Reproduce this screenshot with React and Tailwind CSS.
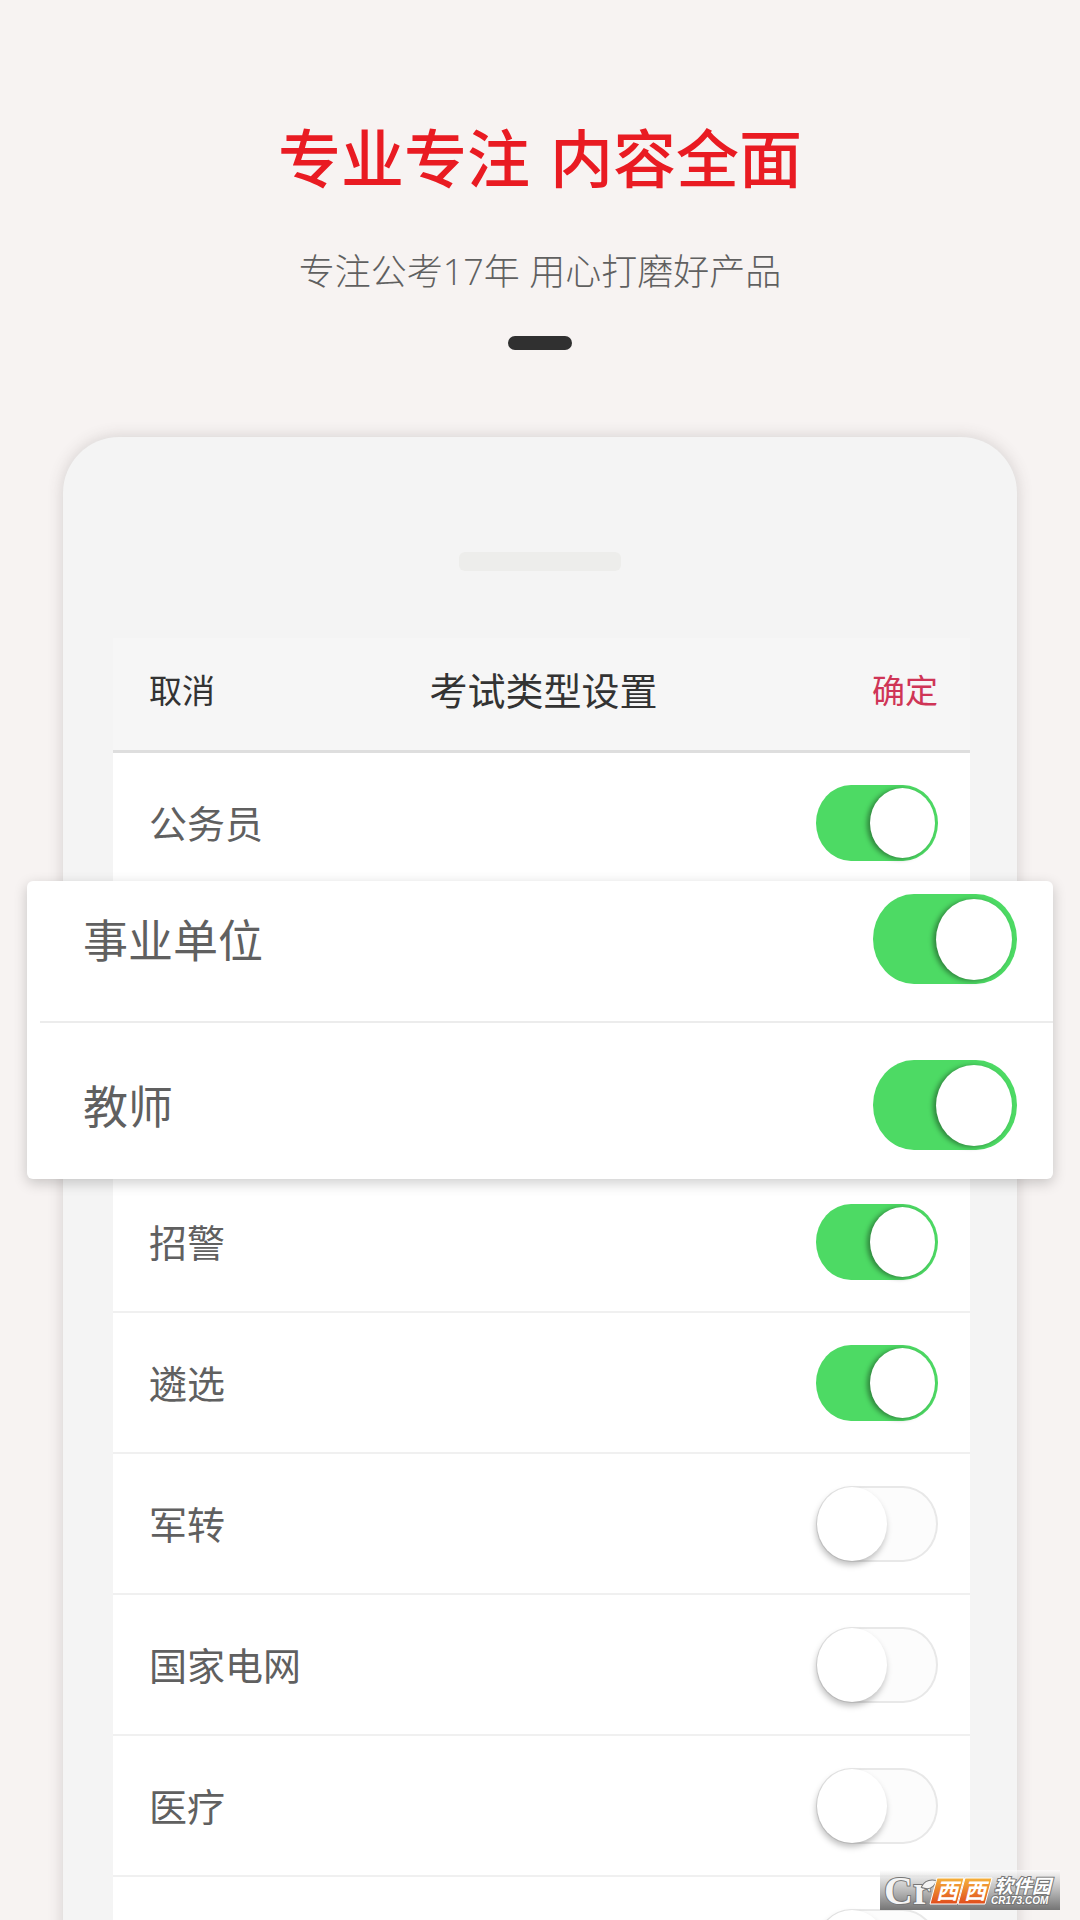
import { useState } from 'react';

const PINNED = [
  { id: 'institution', label: '事业单位' },
  { id: 'teacher', label: '教师' },
];

const REST = [
  { id: 'police', label: '招警' },
  { id: 'selection', label: '遴选' },
  { id: 'military', label: '军转' },
  { id: 'grid', label: '国家电网' },
  { id: 'medical', label: '医疗' },
  { id: 'other', label: '' },
];

function Switch({ id, checked, onChange, large, label }) {
  const size = large
    ? 'h-[90px] w-[144px] rounded-[41px/45px] px-[5px] before:h-[81px] before:w-[76px]'
    : checked
      ? 'h-[76px] w-[122px] rounded-[35px/38px] px-[3px] before:h-[70px] before:w-[65px]'
      : 'h-[76px] w-[122px] rounded-[35px/38px] before:h-[74px] before:w-[70px]';
  const color = checked
    ? 'justify-end bg-[#4dda64] before:shadow-[-3px_1px_5px_rgba(0,0,0,0.4)]'
    : 'justify-start border-2 border-[#e8e8e8] bg-[#fcfcfc] before:-ml-px before:shadow-[-1px_4px_6px_rgba(0,0,0,0.25)]';

  return (
    <input
      id={id}
      type="checkbox"
      role="switch"
      aria-label={label || '其他'}
      checked={checked}
      onChange={onChange}
      className={`flex shrink-0 cursor-pointer appearance-none items-center before:shrink-0 before:rounded-[50%] before:bg-white ${size} ${color}`}
    />
  );
}

function Row({ item, checked, onToggle }) {
  return (
    <li className="flex h-[141px] items-center justify-between border-b-2 border-[#f0f0f0] pr-8 pl-9">
      <label htmlFor={item.id} className="text-[38px] leading-none text-[#606060]">
        {item.label}
      </label>
      <Switch id={item.id} label={item.label} checked={checked} onChange={() => onToggle(item.id)} />
    </li>
  );
}

function Watermark() {
  return (
    <div className="absolute right-5 bottom-[10px] h-10 w-[180px] bg-linear-to-b from-white/60 via-[#b4b4b4]/90 to-[#757575]">
      <svg viewBox="0 0 180 40" className="h-full w-full overflow-visible" role="img" aria-label="西西软件园">
        <defs>
          <linearGradient id="tile" x1="0" y1="0" x2="0" y2="1">
            <stop offset="0" stopColor="#f5b23c" />
            <stop offset="1" stopColor="#e04c1c" />
          </linearGradient>
        </defs>
        <g fill="#f4f4f4" stroke="#777" strokeWidth="2" paintOrder="stroke">
          <text x="4" y="34" fontSize="40" fontWeight="700" fontFamily="Liberation Serif, serif">Cr</text>
          <path d="M42 17 Q46 9 56 11 Q52 21 42 17 Z" />
        </g>
        <g fill="url(#tile)" stroke="#fff" strokeWidth="1">
          <path d="M57 8 H84 L77 34 H50 Z" />
          <path d="M85 8 H112 L105 34 H78 Z" />
        </g>
        <g fill="#fff" fontFamily="Noto Sans CJK SC, sans-serif" fontWeight="700" fontStyle="italic">
          <text x="56" y="29" fontSize="22">西</text>
          <text x="84" y="29" fontSize="22">西</text>
          <g stroke="#777" strokeWidth="2" paintOrder="stroke">
            <text x="114" y="23" fontSize="19">软件园</text>
            <text x="111" y="34" fontSize="10" fontFamily="Liberation Sans, sans-serif">CR173.COM</text>
          </g>
        </g>
      </svg>
    </div>
  );
}

export default function App() {
  const [enabled, setEnabled] = useState({
    civil: true,
    institution: true,
    teacher: true,
    police: true,
    selection: true,
  });

  const toggle = (id) => setEnabled((prev) => ({ ...prev, [id]: !prev[id] }));

  return (
    <div className="relative flex h-screen flex-col overflow-hidden bg-[#f7f3f2] font-['Open_Sans','Noto_Sans_CJK_SC',sans-serif]">
      <header className="flex shrink-0 flex-col items-center pt-[126px]">
        <h1 className="flex gap-5 text-[63px] leading-[64px] font-medium text-[#e91b22]">
          <span>专业专注</span>
          <span>内容全面</span>
        </h1>
        <p className="mt-[58px] text-[36px] leading-[48px] font-light text-[#606060]">专注公考17年 用心打磨好产品</p>
        <div className="mt-10 h-[14px] w-16 rounded-full bg-[#303030]" />
      </header>

      {/* phone */}
      <div className="mx-[63px] mt-[87px] shrink-0 rounded-t-[56px] bg-[#f4f4f4] pr-[47px] pl-[50px] shadow-[0_0_16px_rgba(70,60,60,0.2)]">
        <div className="flex h-[201px] justify-center pt-[115px] pr-1">
          <div className="h-[19px] w-[162px] rounded-md bg-[#ededeb]" />
        </div>

        <div className="bg-white">
          <div className="grid h-[115px] grid-cols-3 items-center border-b-3 border-[#dedede] bg-[#f6f6f6] pr-8 pb-2 pl-9 text-[33px] leading-none">
            <button type="button" className="justify-self-start text-[#333]">取消</button>
            <h2 className="justify-self-center text-[38px] whitespace-nowrap text-[#333]">考试类型设置</h2>
            <button type="button" className="justify-self-end text-[#cf3556]">确定</button>
          </div>

          <ul>
            <Row item={{ id: 'civil', label: '公务员' }} checked={!!enabled.civil} onToggle={toggle} />

            {/* enlarged rows, wider than the phone */}
            <li className="relative z-10 -mt-[13px] -mr-[83px] -mb-[7px] -ml-[86px] rounded-md bg-white shadow-[0_4px_14px_rgba(0,0,0,0.2)]">
              <ul className="divide-y-2 divide-[#ececec] pl-[13px]">
                {PINNED.map((item, i) => (
                  <li
                    key={item.id}
                    className={`flex items-start justify-between pr-9 pl-[43px] ${i === 0 ? 'h-[142px] pt-[13px]' : 'h-[156px] pt-[37px]'}`}
                  >
                    <label htmlFor={item.id} className="pt-0.5 text-[45px] leading-[90px] text-[#606060]">
                      {item.label}
                    </label>
                    <Switch large id={item.id} label={item.label} checked={!!enabled[item.id]} onChange={() => toggle(item.id)} />
                  </li>
                ))}
              </ul>
            </li>

            {REST.map((item) => (
              <Row key={item.id} item={item} checked={!!enabled[item.id]} onToggle={toggle} />
            ))}
          </ul>
        </div>
      </div>

      <Watermark />
    </div>
  );
}
